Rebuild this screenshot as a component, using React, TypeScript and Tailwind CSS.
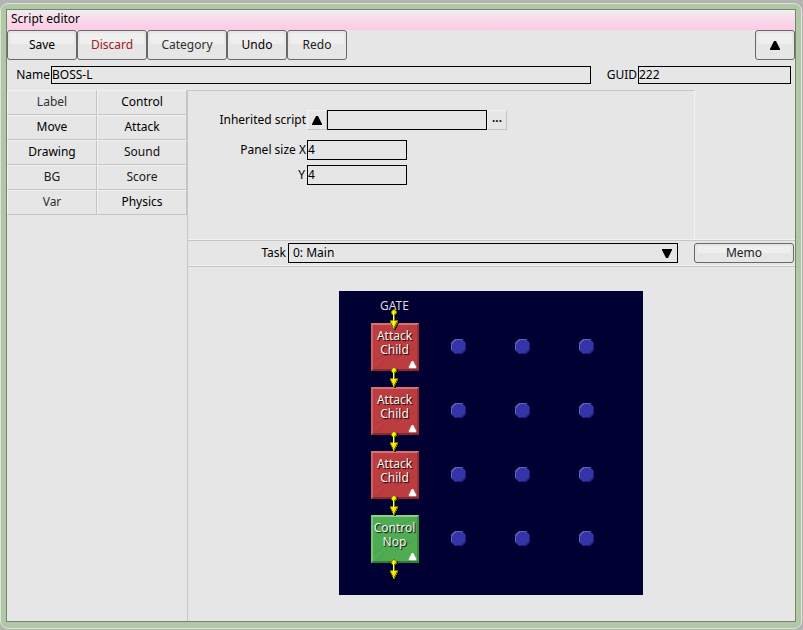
import type { ReactNode } from "react";

const FONT = "font-['Noto_Sans','Open_Sans',sans-serif]";

const toolbar = [
  { label: "Save", style: "w-[70px] text-black" },
  { label: "Discard", style: "w-[70px] text-[#a02020]" },
  { label: "Category", style: "w-[80px] text-[#303030]" },
  { label: "Undo", style: "w-[60px] text-black" },
  { label: "Redo", style: "w-[60px] text-[#202020]" },
];

const categories = [
  { label: "Label", tone: "text-[#303030]" },
  { label: "Control", tone: "text-black" },
  { label: "Move", tone: "text-black" },
  { label: "Attack", tone: "text-black" },
  { label: "Drawing", tone: "text-black" },
  { label: "Sound", tone: "text-[#101010]" },
  { label: "BG", tone: "text-[#202020]" },
  { label: "Score", tone: "text-[#202020]" },
  { label: "Var", tone: "text-[#303030]" },
  { label: "Physics", tone: "text-black" },
];

const nodes = [
  { text: "Attack\nChild", kind: "attack" },
  { text: "Attack\nChild", kind: "attack" },
  { text: "Attack\nChild", kind: "attack" },
  { text: "Control\nNop", kind: "control" },
];

const CELL = 64;
const rows = [0, 1, 2, 3];
const dotColumns = [1, 2, 3];
const arrowTops = [18, 76, 140, 204, 268];

const inputStyle =
  "appearance-none rounded-none border border-black bg-transparent text-black outline-none";
const bevelStyle =
  "border border-t-[#f2f2f2] border-r-[#c4c4c4] border-b-[#c4c4c4] border-l-[#f2f2f2]";

function GlossButton({ className, label, children }: { className: string; label?: string; children: ReactNode }) {
  return (
    <button
      type="button"
      aria-label={label}
      className={`relative flex items-center justify-center rounded-[3px] border border-[#686868] ${className}`}
    >
      <span className="absolute inset-x-0.5 top-0.5 h-2/5 rounded-[3px] bg-[#efefef]" />
      <span className="relative">{children}</span>
    </button>
  );
}

function Triangle({ down = false }: { down?: boolean }) {
  return (
    <svg width="10" height="9" viewBox="0 0 10 9" aria-hidden="true" className="block">
      <path d={down ? "M0 0H10V1L6 9H4L0 1Z" : "M4 0H6L10 8V9H0V8Z"} fill="#000" />
    </svg>
  );
}

function LinkArrow() {
  return (
    <svg width="12" height="22" viewBox="0 0 12 22" aria-hidden="true" className="block" shapeRendering="crispEdges">
      <path d="M6 1H8V2H10V6H9V7H8V12H11V15H10V17H9V19H8V21H6V20H5V18H4V16H3V12H5V5Z" fill="#000" opacity=".7" />
      <path d="M5 0H7V1H8V2H9V5H8V6H7V11H10V14H9V16H8V18H7V20H5V18H4V16H3V14H2V11H5V6H4V5H3V2H4V1H5Z" fill="#7a7600" />
      <path d="M5 1H7V2H8V4H7V5H6V12H9V13H8V15H7V17H6V19H5V16H4V14H3V12H5V5H4V2H5Z" fill="#e6e000" />
      <path d="M5 2H6V12H7V13H6V16H5Z" fill="#ffff48" />
    </svg>
  );
}

function Dot() {
  return (
    <svg width="18" height="18" viewBox="0 0 18 18" aria-hidden="true" className="block">
      <path d="M5 1H12L16 5V12L12 16H5L1 12V5Z" fill="#3434a6" />
      <path d="M1 12V5L5 1H12L13 2H6L2 6V12Z" fill="#6262c4" />
      <path d="M16 5V12L12 16H5L4 15H11L15 11V4Z" fill="#1e1e7c" />
    </svg>
  );
}

function ScriptNode({ text, kind }: { text: string; kind: string }) {
  const attack = kind === "attack";
  return (
    <div
      className={`relative h-12 w-12 border-2 ${
        attack
          ? "border-t-[#d87272] border-r-[#9c2e32] border-b-[#8c282c] border-l-[#cf6266] bg-[#bd3c40]"
          : "border-t-[#8bd28b] border-r-[#388c3c] border-b-[#2f7c34] border-l-[#78c47a] bg-[#4fac52]"
      }`}
    >
      <svg width="44" height="44" viewBox="0 0 44 44" aria-hidden="true" className="absolute top-0 left-0">
        <path d="M0 37L7 33L10 29M27 8L36 4L43 0M5 43L11 36M22 34L30 29L41 24" fill="none" stroke="#000" strokeWidth="2" opacity=".04" />
        <path d="M1 39L9 34M28 10L39 4M24 35L36 29" fill="none" stroke="#fff" opacity=".05" />
      </svg>
      <p className="relative -mx-2 pt-1 text-center leading-[14px] whitespace-pre-line text-[#f4f4f4] [text-shadow:1px_1px_1px_#000]">
        {text}
      </p>
      <svg width="9" height="8" viewBox="0 0 9 8" aria-hidden="true" className="absolute right-0 bottom-0">
        <path d="M4 0H5L8 6V7H1V6Z" fill="#fff" stroke="#fff" strokeWidth=".5" />
      </svg>
    </div>
  );
}

export default function App() {
  return (
    <div className={`min-h-screen bg-[#b4b4b4] pt-[3px] pr-px pb-px text-xs text-black ${FONT}`}>
      <div className="flex h-[calc(100vh-4px)] flex-col rounded-lg border border-[#dde6d6] bg-[#b0c8a6] pt-[5px] pr-[5px] pb-[6px] pl-[5px]">
        <main className="flex min-h-0 flex-1 flex-col border border-[#76866e] bg-[#e6e6e6]">
          <h1 className="h-5 bg-linear-to-b from-[#f0ecee] to-[#ffc8e6] pl-1 leading-[18px]">Script editor</h1>

          <div className="flex h-[30px]" role="toolbar" aria-label="Script actions">
            {toolbar.map(({ label, style }) => (
              <GlossButton key={label} className={style}>
                {label}
              </GlossButton>
            ))}
            <GlossButton label="Collapse" className="ml-auto w-10">
              <Triangle />
            </GlossButton>
          </div>

          <div className="flex h-[30px] items-center pr-1 pl-1">
            <label htmlFor="name" className="w-10 pr-px text-right">Name</label>
            <input id="name" defaultValue="BOSS-L" className={`h-[18px] min-w-0 flex-1 pb-px ${inputStyle}`} />
            <label htmlFor="guid" className="w-[47px] pr-px text-right">GUID</label>
            <input id="guid" defaultValue="222" className={`h-[18px] w-[153px] pb-px ${inputStyle}`} />
          </div>

          <div className="flex min-h-0 flex-1">
            <nav className="grid w-[180px] grid-cols-2 content-start" aria-label="Command categories">
              {categories.map(({ label, tone }) => (
                <button key={label} type="button" className={`h-[25px] pb-px ${bevelStyle} ${tone}`}>
                  {label}
                </button>
              ))}
            </nav>

            <section className="flex min-w-0 flex-1 flex-col border-l border-[#c6c6c6]">
              <div className="mr-[100px] h-[149px] border-t border-r border-t-[#c6c6c6] border-r-[#f2f2f2] pt-[19px]">
                <div className="flex h-5 items-center">
                  <label htmlFor="inherited" className="w-[119px] pr-px text-right">Inherited script</label>
                  <button type="button" aria-label="Go to inherited script" className={`flex h-5 w-5 items-center justify-center ${bevelStyle}`}>
                    <Triangle />
                  </button>
                  <input id="inherited" className={`h-5 w-40 ${inputStyle}`} />
                  <button type="button" aria-label="Browse scripts" className={`flex h-5 w-5 items-center justify-center pb-1 font-semibold ${bevelStyle}`}>
                    ...
                  </button>
                </div>
                <div className="mt-2.5 flex h-5 items-center">
                  <label htmlFor="size-x" className="w-[119px] pr-px text-right">Panel size X</label>
                  <input id="size-x" defaultValue="4" className={`h-5 w-[100px] pb-0.5 ${inputStyle}`} />
                </div>
                <div className="mt-[5px] flex h-5 items-center">
                  <label htmlFor="size-y" className="w-[119px] pr-0.5 text-right">Y</label>
                  <input id="size-y" defaultValue="4" className={`h-5 w-[100px] pb-0.5 ${inputStyle}`} />
                </div>
              </div>

              <div className="border-t border-[#f2f2f2]">
                <div className="flex h-[26px] items-center border-t border-b border-t-[#c6c6c6] border-b-[#f2f2f2] pr-px">
                  <label htmlFor="task" className="w-[100px] pr-0.5 text-right">Task</label>
                  <div className="relative h-5 min-w-0 flex-1">
                    <select id="task" className={`h-5 w-full pl-1 ${inputStyle}`}>
                      <option>0: Main</option>
                    </select>
                    <span className="pointer-events-none absolute top-[6px] right-[6px]">
                      <Triangle down />
                    </span>
                  </div>
                  <GlossButton className="ml-4 h-5 w-[100px] text-[#202020]">Memo</GlossButton>
                </div>
              </div>

              <div className="flex min-h-0 flex-1 items-center justify-center border-t border-[#c6c6c6] pr-0.5 pb-0.5">
                <div className="relative h-[304px] w-[304px] bg-[#000032]">
                  <div className="absolute top-2 left-8 w-12 text-center leading-[14px] text-[#d8d8d8]">GATE</div>
                  {nodes.map((node, i) => (
                    <div key={i} className="absolute left-8" style={{ top: 32 + i * CELL }}>
                      <ScriptNode {...node} />
                    </div>
                  ))}
                  {arrowTops.map((top) => (
                    <div key={top} className="absolute left-[49px]" style={{ top }}>
                      <LinkArrow />
                    </div>
                  ))}
                  {rows.map((row) =>
                    dotColumns.map((col) => (
                      <div key={`${row}-${col}`} className="absolute" style={{ top: 47 + row * CELL, left: 47 + col * CELL }}>
                        <Dot />
                      </div>
                    )),
                  )}
                </div>
              </div>
            </section>
          </div>
        </main>
      </div>
    </div>
  );
}
